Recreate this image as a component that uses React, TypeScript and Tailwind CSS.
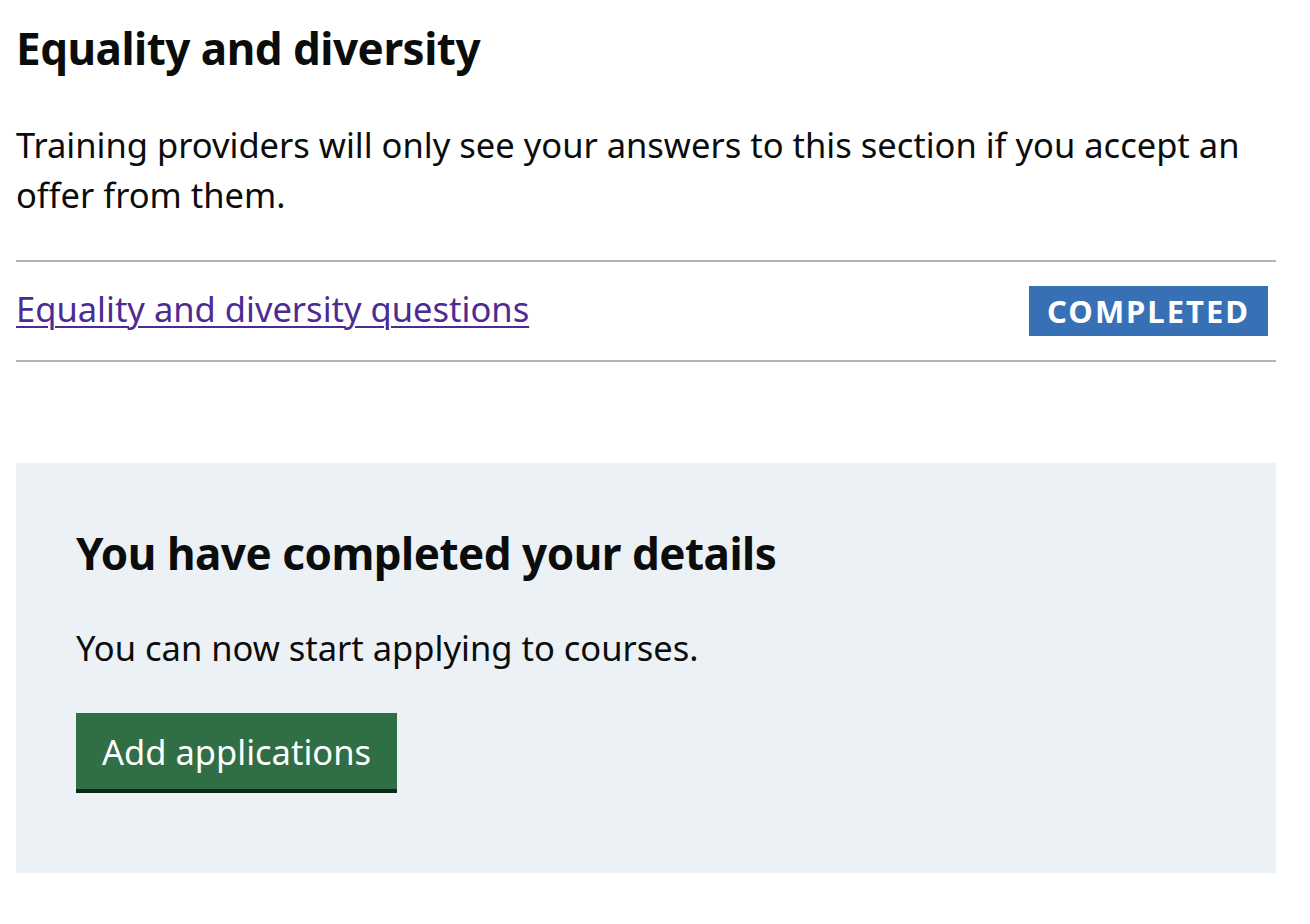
export default function App() {
  const font = "font-['Noto_Sans',_'Liberation_Sans',_sans-serif]";

  return (
    <div className={`min-h-[924px] bg-white text-[#0b0c0c] ${font}`}>
      <div className="ml-4 w-[1260px] pt-[18px]">
        <h2 className="text-[44px] leading-[60px] font-bold tracking-[-0.5px]">Equality and diversity</h2>
        <p className="mt-[42px] text-[34.5px] leading-[50px]">
          Training providers will only see your answers to this section if you accept an offer from them.
        </p>

        <div className="mt-[40px] flex items-center justify-between border-y-2 border-[#b1b4b6] py-[24px]">
          <a
            href="#"
            className="-mt-1 text-[34.5px] leading-[50px] text-[#4c2c92] underline decoration-2 underline-offset-[4px]"
          >
            Equality and diversity questions
          </a>
          <span className="mr-2 bg-[#3870b5] px-[18px] py-[7px] text-[31px] leading-[36px] font-bold tracking-[2px] text-white">
            COMPLETED
          </span>
        </div>

        <div className="mt-[101px] bg-[#ecf1f5] px-[60px] pt-[60px] pb-[84px]">
          <h2 className="text-[44px] leading-[60px] font-bold tracking-[-0.5px]">You have completed your details</h2>
          <p className="mt-[40px] text-[34.5px] leading-[50px]">You can now start applying to courses.</p>
          <button
            type="button"
            className="mt-[40px] border-4 border-transparent bg-[#306f45] px-[22px] pt-[16px] pb-[14px] text-[34.5px] leading-[38px] text-white shadow-[0_4px_0_#0d2a17]"
          >
            Add applications
          </button>
        </div>
      </div>
    </div>
  );
}
